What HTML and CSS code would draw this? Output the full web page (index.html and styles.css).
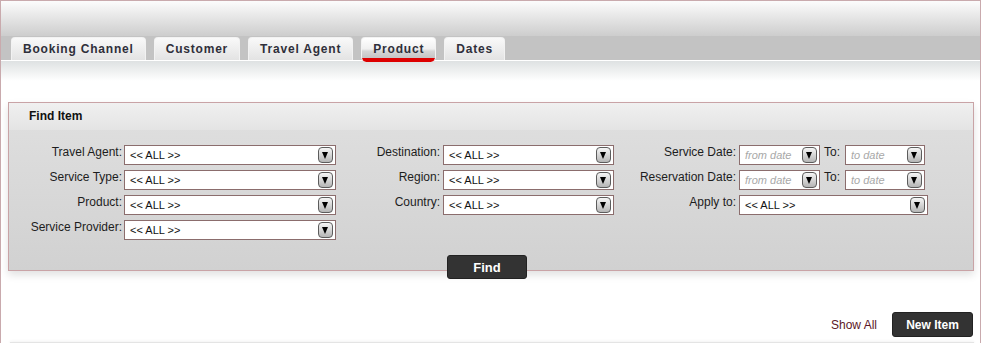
FILE: index.html
```html
<!DOCTYPE html>
<html lang="en">

<head>
    <meta charset="UTF-8">
    <meta name="viewport" content="width=device-width, initial-scale=1.0">
    <title>Find Item</title>
    <link rel="stylesheet" href="styles.css">
</head>

<body>
    <div class="page">
        <div class="masthead"></div>
        <div class="tabbar">
            <a class="tab">Booking Channel</a>
            <a class="tab">Customer</a>
            <a class="tab">Travel Agent</a>
            <a class="tab active">Product</a>
            <a class="tab">Dates</a>
        </div>
        <div class="shade"></div>

        <div class="panel">
            <div class="panel-head">Find Item</div>
            <div class="panel-body">
                <div class="col col-1">
                    <label>Travel Agent:</label>
                    <div class="select"><span>&lt;&lt; ALL &gt;&gt;</span><i class="arrow"></i></div>
                    <label>Service Type:</label>
                    <div class="select"><span>&lt;&lt; ALL &gt;&gt;</span><i class="arrow"></i></div>
                    <label>Product:</label>
                    <div class="select"><span>&lt;&lt; ALL &gt;&gt;</span><i class="arrow"></i></div>
                    <label>Service Provider:</label>
                    <div class="select"><span>&lt;&lt; ALL &gt;&gt;</span><i class="arrow"></i></div>
                </div>
                <div class="col col-2">
                    <label>Destination:</label>
                    <div class="select"><span>&lt;&lt; ALL &gt;&gt;</span><i class="arrow"></i></div>
                    <label>Region:</label>
                    <div class="select"><span>&lt;&lt; ALL &gt;&gt;</span><i class="arrow"></i></div>
                    <label>Country:</label>
                    <div class="select"><span>&lt;&lt; ALL &gt;&gt;</span><i class="arrow"></i></div>
                </div>
                <div class="col col-3">
                    <label>Service Date:</label>
                    <div class="range">
                        <div class="select date from"><span>from date</span><i class="arrow"></i></div>
                        <label class="to">To:</label>
                        <div class="select date"><span>to date</span><i class="arrow"></i></div>
                    </div>
                    <label>Reservation Date:</label>
                    <div class="range">
                        <div class="select date from"><span>from date</span><i class="arrow"></i></div>
                        <label class="to">To:</label>
                        <div class="select date"><span>to date</span><i class="arrow"></i></div>
                    </div>
                    <label>Apply to:</label>
                    <div class="select apply"><span>&lt;&lt; ALL &gt;&gt;</span><i class="arrow"></i></div>
                </div>
            </div>
            <div class="panel-foot">
                <button class="btn find">Find</button>
            </div>
        </div>

        <div class="actions">
            <a class="show-all">Show All</a>
            <button class="btn new-item">New Item</button>
        </div>
        <div class="list"></div>
    </div>
</body>

</html>
```

FILE: styles.css
```css
body {
    margin: 0;
    background: #ffffff;
    font-family: "Liberation Sans", Arial, sans-serif;
    font-size: 12px;
    color: #222222;
    overflow: hidden;
}

.page {
    margin-right: 1px;
    min-height: 343px;
    border: 1px solid #c9aaad;
    border-bottom: none;
}

/* top grey band */
.masthead {
    height: 35px;
    background: linear-gradient(#fcfcfc, #cdcdcd);
}

.tabbar {
    display: flex;
    align-items: flex-start;
    gap: 8px;
    height: 23px;
    padding: 1px 0 0 10px;
    background: #c3c3c3;
    border-bottom: 1px solid #ffffff;
}

.tab {
    position: relative;
    z-index: 1;
    height: 23px;
    box-sizing: border-box;
    padding: 0 11px 0 11px;
    line-height: 22px;
    font-size: 12px;
    font-weight: bold;
    letter-spacing: 0.8px;
    color: #2f2f3a;
    background: linear-gradient(#f9f9f9, #e3e3e3);
    border: 1px solid #f2f2f2;
    border-bottom: none;
    border-radius: 4px 4px 0 0;
}

.tab.active {
    height: 25px;
    background: linear-gradient(#ffffff 0, #f0f0f0 45%, #d6d6d6 55%, #c6c6c6 80%, #c6c6c6 84%, #dd0000 84%, #dd0000 100%);
    border-radius: 4px 4px 5px 5px;
}

.shade {
    height: 20px;
    background: linear-gradient(#dee1e2, #ffffff);
}

/* search panel */
.panel {
    margin: 21px 6px 0 7px;
    border: 1px solid #c9a3a6;
    background: linear-gradient(#e0e0e0, #d1d1d1);
    box-shadow: 0 4px 8px rgba(0, 0, 0, 0.12);
}

.panel-head {
    height: 27px;
    line-height: 26px;
    padding-left: 20px;
    font-weight: bold;
    color: #111111;
    background: linear-gradient(#f0f0f0, #e4e4e4);
}

.panel-body {
    display: flex;
    padding-top: 15px;
}

.col {
    display: grid;
    row-gap: 5px;
    align-content: start;
}

.col-1 {
    grid-template-columns: 113px 212px;
    column-gap: 2px;
}

.col-2 {
    grid-template-columns: 104px 171px;
    column-gap: 3px;
}

.col-3 {
    grid-template-columns: 122px auto;
    column-gap: 3px;
}

label {
    text-align: right;
    line-height: 15px;
    white-space: nowrap;
    color: #1d1d1d;
}

.select {
    display: flex;
    align-items: center;
    justify-content: space-between;
    height: 20px;
    box-sizing: border-box;
    border: 1px solid #8b6d6d;
    background: #ffffff;
    padding: 0 2px 0 5px;
    font-size: 11px;
    color: #111111;
}

.arrow {
    position: relative;
    width: 15px;
    height: 16px;
    box-sizing: border-box;
    border: 1px solid #5c5c5c;
    border-radius: 4px;
    background: linear-gradient(#f6f6f6, #b5b5b5);
}

.arrow::after {
    content: "";
    position: absolute;
    left: 3px;
    top: 4px;
    border-left: 3.5px solid transparent;
    border-right: 3.5px solid transparent;
    border-top: 7px solid #000000;
}

.range {
    display: flex;
    align-items: flex-start;
}

.date {
    width: 80px;
    font-style: italic;
    color: #a8a8a8;
}

.date.from {
    width: 81px;
}

.to {
    margin: 0 5px 0 4px;
}

.apply {
    width: 189px;
}

.panel-foot {
    display: flex;
    justify-content: center;
    height: 30px;
    padding-right: 8px;
}

.btn {
    height: 24px;
    border: 1px solid #222222;
    border-radius: 3px;
    background: #333333;
    color: #ffffff;
    font-family: "Liberation Sans", Arial, sans-serif;
    font-size: 12px;
    font-weight: bold;
    padding: 0;
    cursor: pointer;
}

.find {
    width: 80px;
    margin-top: 15px;
    font-size: 13px;
}

/* bottom actions */
.actions {
    display: flex;
    justify-content: flex-end;
    align-items: center;
    gap: 15px;
    margin-top: 41px;
    padding-right: 7px;
}

.show-all {
    color: #5c1727;
    cursor: pointer;
}

.new-item {
    width: 81px;
    height: 25px;
}

.list {
    height: 20px;
    margin: 5px 6px 0 9px;
    border-top: 1px solid #e4e4e4;
    box-shadow: 0 -1px 3px rgba(0, 0, 0, 0.05);
}
```
